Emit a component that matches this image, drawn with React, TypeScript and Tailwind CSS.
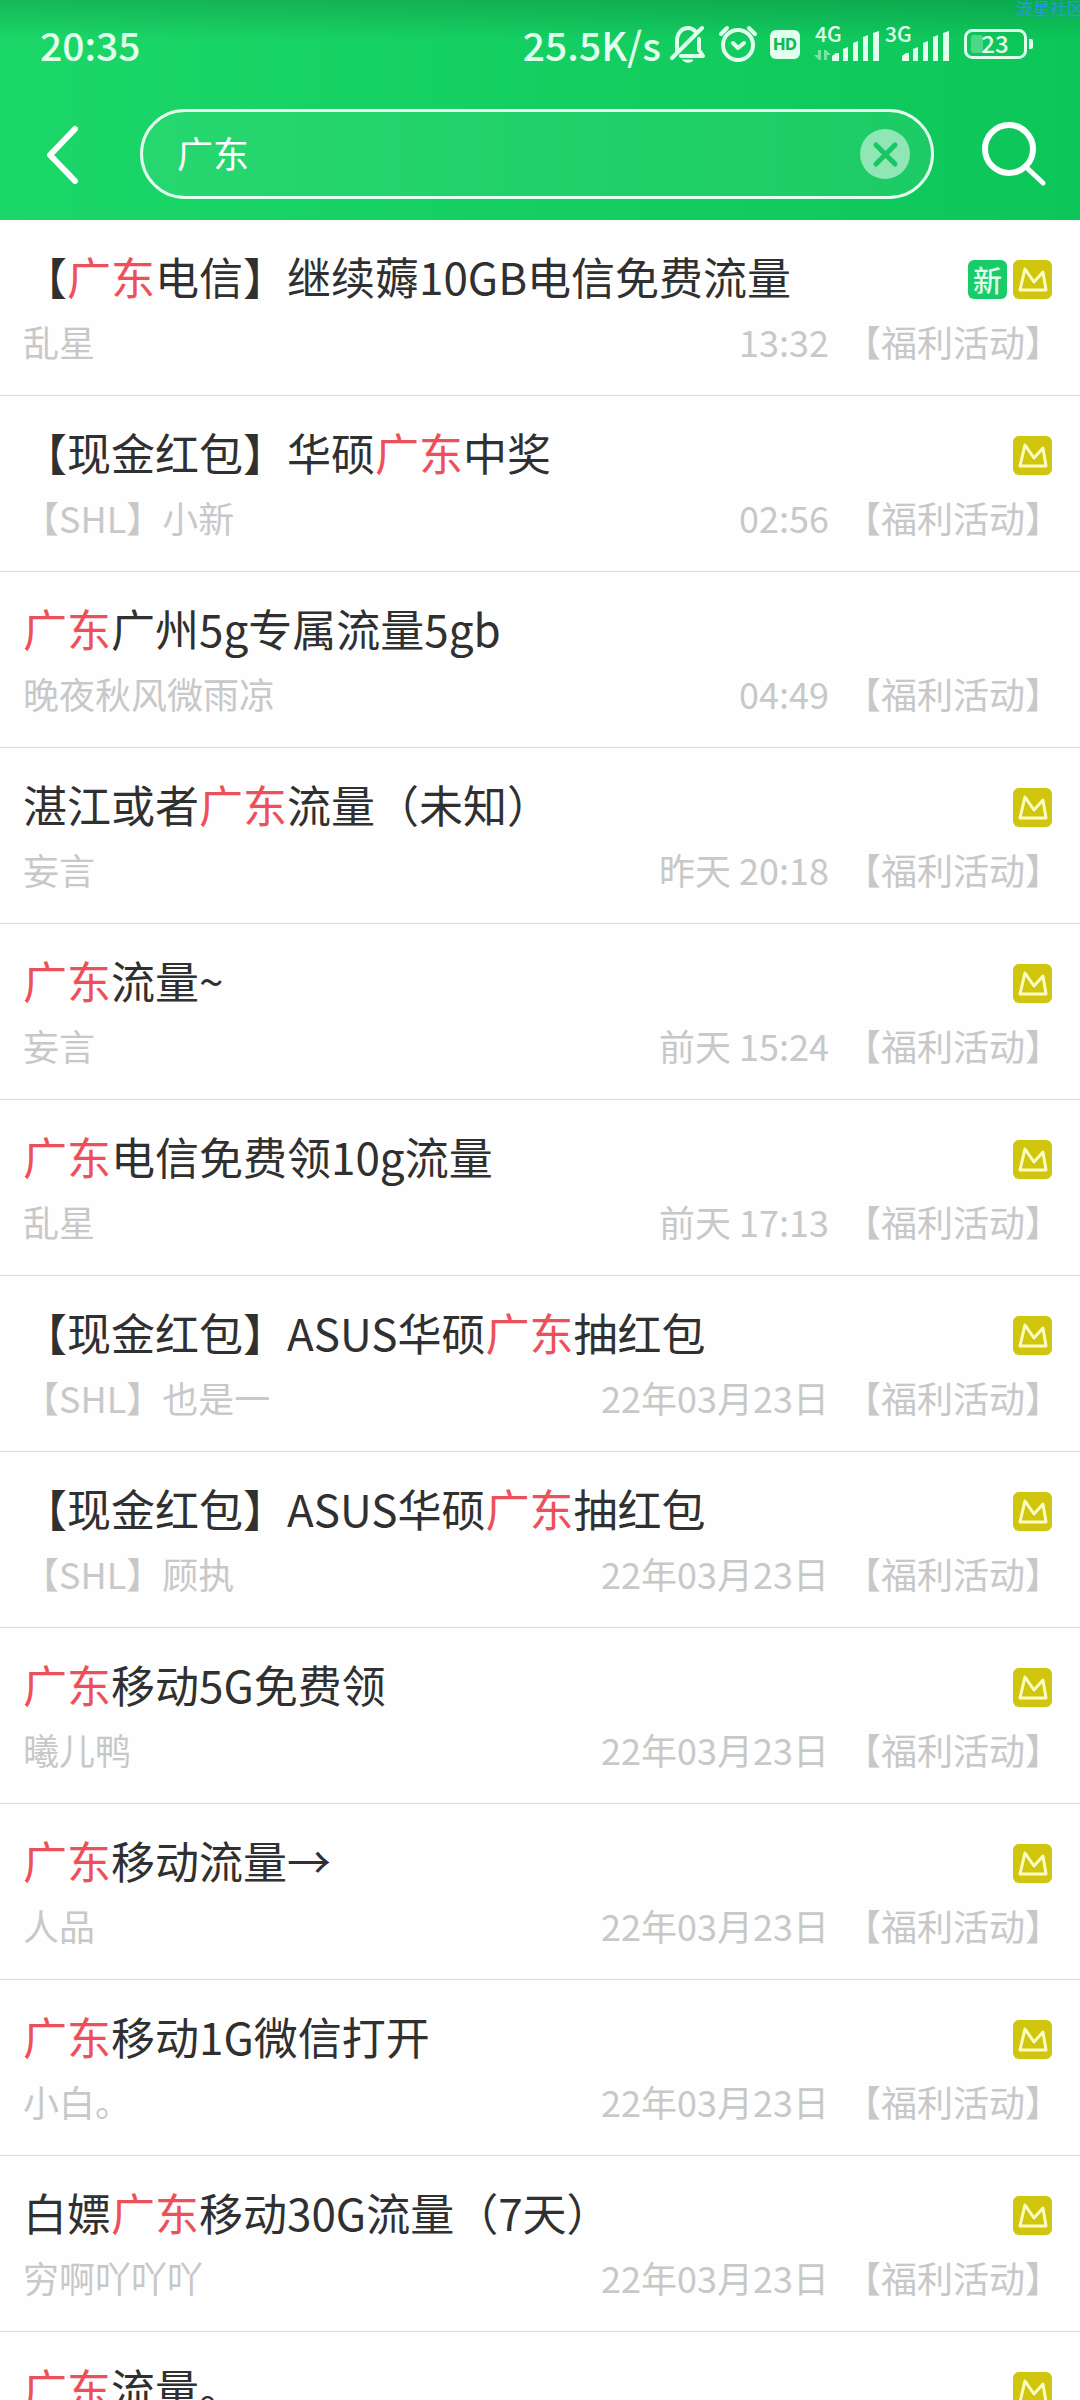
type Post = {
  title: string;
  author: string;
  date: string;
  isNew?: boolean;
  crown?: boolean;
};

const KEYWORD = "广东";

const posts: Post[] = [
  { title: "【广东电信】继续薅10GB电信免费流量", author: "乱星", date: "13:32", isNew: true, crown: true },
  { title: "【现金红包】华硕广东中奖", author: "【SHL】小新", date: "02:56", crown: true },
  { title: "广东广州5g专属流量5gb", author: "晚夜秋风微雨凉", date: "04:49" },
  { title: "湛江或者广东流量（未知）", author: "妄言", date: "昨天 20:18", crown: true },
  { title: "广东流量~", author: "妄言", date: "前天 15:24", crown: true },
  { title: "广东电信免费领10g流量", author: "乱星", date: "前天 17:13", crown: true },
  { title: "【现金红包】ASUS华硕广东抽红包", author: "【SHL】也是一", date: "22年03月23日", crown: true },
  { title: "【现金红包】ASUS华硕广东抽红包", author: "【SHL】顾执", date: "22年03月23日", crown: true },
  { title: "广东移动5G免费领", author: "曦儿鸭", date: "22年03月23日", crown: true },
  { title: "广东移动流量→", author: "人品", date: "22年03月23日", crown: true },
  { title: "广东移动1G微信打开", author: "小白。", date: "22年03月23日", crown: true },
  { title: "白嫖广东移动30G流量（7天）", author: "穷啊吖吖吖", date: "22年03月23日", crown: true },
  { title: "广东流量。", author: "乱星", date: "22年03月23日", crown: true },
];

function Signal({ label, data }: { label: string; data?: boolean }) {
  return (
    <svg className="h-[38px] w-[68px] overflow-visible" viewBox="0 0 68 38" fill="currentColor">
      <text x="1" y="17" fontSize="21" fontWeight="500">
        {label}
      </text>
      {data && (
        <g opacity="0.5">
          <path d="M4 25h3v10H5l-5-5h4zM10 35V25h2l5 5h-4v5z" />
        </g>
      )}
      <path d="M18 31l4-3h3v8h-7z" />
      <path d="M29 24l5-2v14h-5z" />
      <path d="M39 18l5-2v20h-5z" />
      <path d="M49 12l5-2v26h-5z" />
      <path d="M59 8l6-2v30h-6z" />
    </svg>
  );
}

function StatusBar() {
  return (
    <div className="flex h-[90px] items-center justify-between pr-[46px] pb-[2px] pl-10 text-[39px] leading-[58px] font-medium text-[#e0ffec]">
      <span>20:35</span>
      <div className="flex items-center">
        <span>25.5K/s</span>
        <svg className="ml-[9px] h-[38px] w-[36px]" viewBox="0 0 36 38" fill="none" stroke="currentColor" strokeWidth="4" strokeLinecap="round">
          <path d="M2 33L32 3" />
          <path d="M7 26V16C7 8 12 3 18 3c3 0 5 1 7 3" />
          <path d="M11 31h22l-4-6V14" strokeLinejoin="round" />
          <path d="M13 35h10c-2 3-8 3-10 0z" fill="currentColor" strokeWidth="1" />
        </svg>
        <svg className="ml-3 h-[38px] w-[40px]" viewBox="0 0 40 38" fill="none" stroke="currentColor" strokeWidth="4" strokeLinecap="round">
          <circle cx="20" cy="20" r="15" />
          <path d="M3 9L9 3M37 9L31 3" />
          <path d="M15 18l5 5 6-5" strokeLinejoin="round" />
        </svg>
        <span className="ml-3 flex h-[29px] w-[30px] items-center justify-center rounded-md bg-[#e0ffec] font-[Inter] text-[16px] leading-5 font-extrabold text-[#12b757]">
          HD
        </span>
        <div className="ml-[14px] flex items-center gap-[2px]">
          <Signal label="4G" data />
          <Signal label="3G" />
        </div>
        <svg className="ml-3 h-[30px] w-[70px] overflow-visible" viewBox="0 0 70 30" fill="currentColor">
          <rect x="1.5" y="1.5" width="60" height="27" rx="7" fill="none" stroke="currentColor" strokeWidth="3" />
          <rect x="7" y="6" width="12" height="18" rx="3" opacity="0.3" />
          <path d="M65 10h2q2 0 2 2v6q0 2-2 2h-2z" />
          <text x="31" y="24" fontSize="24" fontWeight="500" textAnchor="middle">
            23
          </text>
        </svg>
      </div>
    </div>
  );
}

function SearchBar() {
  return (
    <form className="flex items-center pt-[19px] pr-[30px] pb-[21px] pl-10 text-white">
      <button type="button" aria-label="返回" className="flex w-[100px] shrink-0">
        <svg className="h-[60px] w-[44px]" viewBox="0 0 44 60" fill="none" stroke="currentColor" strokeWidth="6" strokeLinecap="round" strokeLinejoin="round">
          <path d="M35 5L10 31l25 26" />
        </svg>
      </button>
      <div className="flex h-[90px] min-w-0 flex-1 items-center rounded-full border-3 border-[#e3fff0] bg-white/6 pr-[21px] pl-[34px]">
        <input
          aria-label="搜索"
          defaultValue={KEYWORD}
          className="min-w-0 flex-1 bg-transparent pb-1 text-[36px] leading-[54px] outline-none"
        />
        <button type="button" aria-label="清除" className="shrink-0">
          <svg className="size-[50px]" viewBox="0 0 50 50" fill="none">
            <circle cx="25" cy="25" r="25" fill="#90e6b4" />
            <path d="M16 16l19 19M35 16L16 35" stroke="#1bc565" strokeWidth="5" strokeLinecap="round" />
          </svg>
        </button>
      </div>
      <button type="submit" aria-label="搜索" className="ml-[46px] shrink-0">
        <svg className="size-[70px]" viewBox="0 0 70 70" fill="none" stroke="currentColor" strokeWidth="5" strokeLinecap="round">
          <circle cx="29" cy="30" r="24" strokeWidth="6" />
          <path d="M46 48l17 16" />
        </svg>
      </button>
    </form>
  );
}

function Title({ text }: { text: string }) {
  const [before, after] = text.split(KEYWORD);
  return (
    <h2 className="text-[44px] leading-[64px] text-[#303030]">
      {before}
      <span className="text-[#ee5059]">{KEYWORD}</span>
      {after}
    </h2>
  );
}

function PostRow({ post }: { post: Post }) {
  return (
    <li className="border-b border-[#d9d9d9]">
      <a href="#" className="block pt-6 pr-[19px] pb-7 pl-[23px]">
        <div className="flex items-center justify-between pr-[9px]">
          <Title text={post.title} />
          <div className="flex shrink-0 gap-[6px] pt-[6px]">
            {post.isNew && (
              <span className="flex size-[39px] items-center justify-center rounded-md bg-[#1acb6a] text-[29px] leading-none font-medium text-[#dcffea]">
                新
              </span>
            )}
            {post.crown && (
              <svg className="size-[39px] rounded-md bg-[#cfc60f]" viewBox="0 0 39 39" fill="none" stroke="#fdfbc4" strokeWidth="3" strokeLinejoin="round">
                <path d="M7 30l5-21 9 13 9-10 3 18z" />
              </svg>
            )}
          </div>
        </div>
        <div className="mt-[7px] flex items-center text-[36px] leading-[52px] text-[#c8c8c8]">
          <span className="min-w-0 flex-1">{post.author}</span>
          <span>{post.date}</span>
          <span className="ml-4">【福利活动】</span>
        </div>
      </a>
    </li>
  );
}

export default function App() {
  return (
    <div className="relative h-screen overflow-hidden bg-[#fefefe] font-['Noto_Sans_CJK_SC',sans-serif]">
      <header className="bg-linear-to-r from-[#1bd768] to-[#0cc65a]">
        <div className="bg-linear-to-b from-black/15 to-transparent to-[40px]">
          <StatusBar />
          <SearchBar />
        </div>
      </header>
      <span className="absolute top-0 -right-1 text-[17px] leading-4 text-[#2b97e6]">流星社区</span>
      <ul>
        {posts.map((post, i) => (
          <PostRow key={i} post={post} />
        ))}
      </ul>
    </div>
  );
}
